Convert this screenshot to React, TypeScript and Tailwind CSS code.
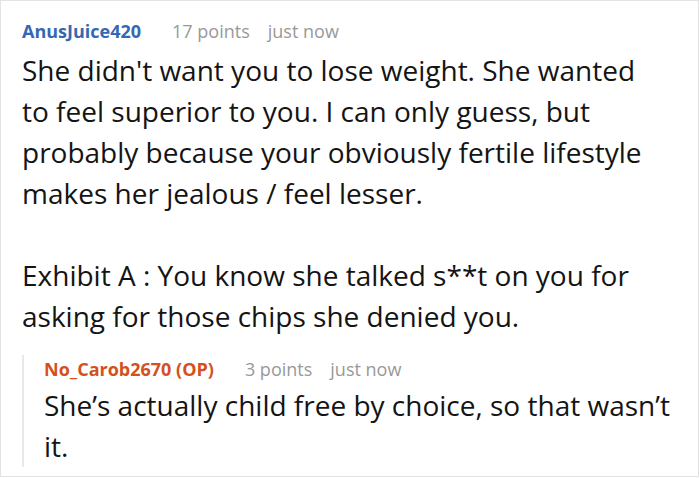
export default function App() {
  return (
    <div className="w-[700px] h-[478px] bg-white font-['Open_Sans',sans-serif]">
      <div className="w-[699px] h-[477px] border border-[#e3e3e3] pl-[21px] pr-[10px] pt-[16px]">
        <div className="flex items-baseline text-[18px] leading-[28px]">
          <span className="font-bold text-[#3568b3]">AnusJuice420</span>
          <span className="ml-[31px] text-[#999999]">17 points</span>
          <span className="ml-[18px] text-[#999999]">just now</span>
        </div>
        <div className="mt-[5px] text-[28px] leading-[41px] text-[#141414]">
          <p>
            She didn't want you to lose weight. She wanted<br />
            to feel superior to you. I can only guess, but<br />
            probably because your obviously fertile lifestyle<br />
            makes her jealous / feel lesser.
          </p>
          <p className="mt-[41px]">
            Exhibit A : You know she talked s**t on you for<br />
            asking for those chips she denied you.
          </p>
        </div>
        <div className="mt-[18px] border-l-2 border-[#e8e8e8] pl-[20px]">
          <div className="flex items-baseline text-[18px] leading-[28px]">
            <span className="font-bold text-[#d4501c]">No_Carob2670 (OP)</span>
            <span className="ml-[31px] text-[#999999]">3 points</span>
            <span className="ml-[18px] text-[#999999]">just now</span>
          </div>
          <p className="mt-[2px] text-[28px] leading-[41px] text-[#141414]">
            She’s actually child free by choice, so that wasn’t<br />
            it.
          </p>
        </div>
      </div>
    </div>
  );
}
